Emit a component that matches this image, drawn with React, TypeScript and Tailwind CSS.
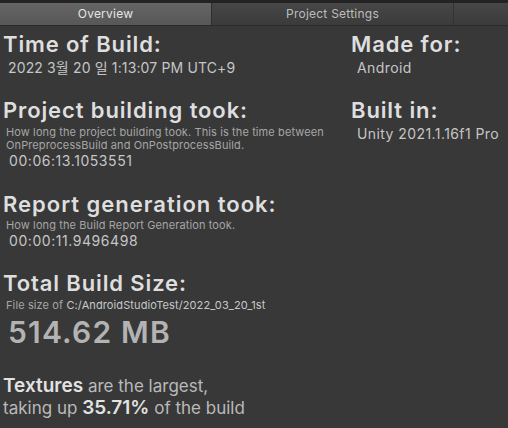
export default function App() {
    const font = { fontFamily: 'Inter, "Noto Sans CJK KR", sans-serif' }

    return (
        <div className="w-[508px] h-[428px] bg-[#383838] overflow-hidden" style={font}>
            {/* tab bar */}
            <div className="h-[26px] bg-[#232323] pt-[3px] flex border-b border-[#2b2b2b]">
                <div className="w-[212px] flex items-center justify-center bg-gradient-to-b from-[#656565] to-[#575757] text-[12px] tracking-[0.02em] text-[#e6e6e6] border-r border-[#2e2e2e]">
                    Overview
                </div>
                <div className="w-[242px] flex items-center justify-center bg-gradient-to-b from-[#474747] to-[#3b3b3b] text-[12px] tracking-[0.02em] text-[#bdbdbd] border-r border-[#333333]">
                    Project Settings
                </div>
                <div className="flex-1 bg-gradient-to-b from-[#474747] to-[#3b3b3b]" />
            </div>

            <div className="flex pt-[5px]">
                {/* left column */}
                <div className="w-[348px]">
                    <h2 className="pl-[3px] text-[22px] leading-[26px] font-semibold tracking-[0.04em] text-[#dedede]">Time of Build:</h2>
                    <div className="mt-[3px] pl-[8px] text-[14px] leading-[16px] tracking-[0.01em] text-[#c6c6c6]">2022 3월 20 일 1:13:07 PM UTC+9</div>

                    <h2 className="mt-[21px] pl-[3px] text-[22px] leading-[26px] font-semibold tracking-[0.04em] text-[#dedede]">Project building took:</h2>
                    <p className="mt-[3px] pl-[6px] text-[11px] leading-[13px] tracking-[0.01em] text-[#a6a6a6]">
                        How long the project building took. This is the time between<br />
                        OnPreprocessBuild and OnPostprocessBuild.
                    </p>
                    <div className="mt-[1px] pl-[9px] text-[14px] leading-[16px] tracking-[0.04em] text-[#c6c6c6]">00:06:13.1053551</div>

                    <h2 className="mt-[22px] pl-[3px] text-[22px] leading-[26px] font-semibold tracking-[0.045em] text-[#dedede]">Report generation took:</h2>
                    <p className="mt-[2px] pl-[6px] text-[11px] leading-[13px] tracking-[0.01em] text-[#a6a6a6]">How long the Build Report Generation took.</p>
                    <div className="mt-[1px] pl-[9px] text-[14px] leading-[16px] tracking-[0.04em] text-[#c6c6c6]">00:00:11.9496498</div>

                    <h2 className="mt-[21px] pl-[3px] text-[22px] leading-[26px] font-semibold tracking-[0.04em] text-[#dedede]">Total Build Size:</h2>
                    <p className="mt-[3px] pl-[6px] text-[11px] leading-[13px] tracking-[0.01em] text-[#a6a6a6]">
                        File size of <span className="text-[#c8c8c8]">C:/AndroidStudioTest/2022_03_20_1st</span>
                    </p>
                    <div className="mt-[3px] pl-[8px] text-[30px] leading-[34px] font-semibold tracking-[0.04em] text-[#b3b3b3]">514.62 MB</div>

                    <div className="mt-[26px] pl-[3px] text-[17px] leading-[22px] text-[#bababa]">
                        <span className="text-[19px] font-semibold text-[#e2e2e2]">Textures</span> are the largest,
                    </div>
                    <div className="pl-[3px] text-[17px] leading-[22px] text-[#bababa]">
                        taking up <span className="text-[19px] font-semibold text-[#e2e2e2]">35.71%</span> of the build
                    </div>
                </div>

                {/* right column */}
                <div className="flex-1 pl-[3px]">
                    <h2 className="text-[22px] leading-[26px] font-semibold tracking-[0.04em] text-[#dedede]">Made for:</h2>
                    <div className="mt-[3px] pl-[6px] text-[14px] leading-[16px] tracking-[0.03em] text-[#c6c6c6]">Android</div>

                    <h2 className="mt-[21px] text-[22px] leading-[26px] font-semibold tracking-[0.04em] text-[#dedede]">Built in:</h2>
                    <div className="mt-[3px] pl-[6px] text-[14px] leading-[16px] tracking-[0.03em] text-[#c6c6c6]">Unity 2021.1.16f1 Pro</div>
                </div>
            </div>
        </div>
    )
}
